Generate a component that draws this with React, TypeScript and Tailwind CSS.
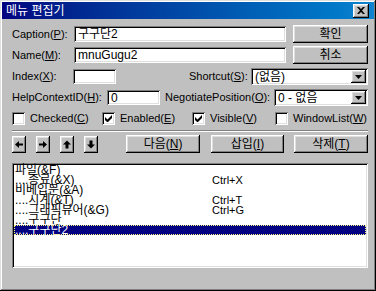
const raised =
  'bg-[#c0c0c0] shadow-[inset_-1px_-1px_#000,inset_1px_1px_#fff,inset_-2px_-2px_#808080,inset_2px_2px_#dfdfdf]'
const sunken =
  'bg-white shadow-[inset_1px_1px_#808080,inset_-1px_-1px_#fff,inset_2px_2px_#000,inset_-2px_-2px_#dfdfdf]'

function Btn({ children, className = '' }: { children: React.ReactNode; className?: string }) {
  return (
    <div className={`${raised} flex items-center justify-center text-black text-[12px] ${className}`}>{children}</div>
  )
}

function Field({ value, className = '' }: { value?: string; className?: string }) {
  return (
    <div className={`${sunken} flex items-center pl-[4px] text-black text-[12px] ${className}`}>
      <span className="leading-none">{value}</span>
    </div>
  )
}

function Combo({ value, className = '' }: { value: string; className?: string }) {
  return (
    <div className={`${sunken} flex items-center p-[2px] text-[12px] ${className}`}>
      <span className="flex-1 pl-[2px] leading-none">{value}</span>
      <div className={`${raised} w-[15px] h-full flex items-center justify-center`}>
        <svg width="7" height="4" viewBox="0 0 7 4">
          <path d="M0 0h7L3.5 4z" fill="#000" />
        </svg>
      </div>
    </div>
  )
}

function Check({ checked, children, className = '' }: { checked?: boolean; children: React.ReactNode; className?: string }) {
  return (
    <div className={`flex items-center gap-[5px] ${className}`}>
      <div className={`${sunken} w-[13px] h-[13px] flex items-center justify-center`}>
        {checked && (
          <svg width="7" height="7" viewBox="0 0 7 7">
            <path d="M0 2v3l2 2h1l4-4V0L2.5 4.5z" fill="#000" />
          </svg>
        )}
      </div>
      <span>{children}</span>
    </div>
  )
}

function Arrow({ dir }: { dir: 'l' | 'r' | 'u' | 'd' }) {
  const d = {
    l: 'M1 4.5 5 1v2.5h4v2H5V8z',
    r: 'M9 4.5 5 1v2.5H1v2h4V8z',
    u: 'M5 0.5 1 4.5h2.5v4h3v-4H9z',
    d: 'M5 8.5 1 4.5h2.5v-4h3v4H9z',
  }[dir]
  return (
    <Btn className="w-[14px] h-[17px]">
      <svg width="10" height="9" viewBox="0 0 10 9">
        <path d={d} fill="#000" />
      </svg>
    </Btn>
  )
}

const items = [
  { text: '파일(&F)', dots: false },
  { text: '종료(&X)', dots: true, key: 'Ctrl+X' },
  { text: '비베입문(&A)', dots: false },
  { text: '시계(&T)', dots: true, key: 'Ctrl+T' },
  { text: '그래픽뷰어(&G)', dots: true, key: 'Ctrl+G' },
  { text: '구구단', dots: true },
  { text: '구구단2', dots: true, sel: true },
]

export default function App() {
  return (
    <div
      className="w-[376px] h-[291px] bg-[#c0c0c0] p-[2px] text-[11px] text-black shadow-[inset_-1px_-1px_#000,inset_1px_1px_#dfdfdf,inset_-2px_-2px_#808080,inset_2px_2px_#fff] flex flex-col"
      style={{ fontFamily: '"Liberation Sans", "Noto Sans CJK KR", sans-serif' }}
    >
      <div className="h-[17px] bg-gradient-to-r from-[#000080] to-[#1084d0] flex items-center pl-[4px] pr-[5px]">
        <span className="text-white text-[12px] leading-none">메뉴 편집기</span>
        <div className={`${raised} ml-auto w-[16px] h-[14px] flex items-center justify-center`}>
          <svg width="8" height="7" viewBox="0 0 8 7">
            <path d="M0 0h2l2 2 2-2h2L5 3.5 8 7H6L4 5 2 7H0l3-3.5z" fill="#000" />
          </svg>
        </div>
      </div>

      <div className="flex flex-col pl-[10px] pr-[6px] pt-[6px]">
        <div className="flex items-center h-[18px]">
          <span className="w-[62px]">Caption(<u>P</u>):</span>
          <Field value="구구단2" className="w-[212px] h-[16px]" />
          <Btn className="ml-auto w-[75px] h-[18px]">확인</Btn>
        </div>
        <div className="flex items-center h-[18px] mt-[3px]">
          <span className="w-[62px]">Name(<u>M</u>):</span>
          <Field value="mnuGugu2" className="w-[212px] h-[16px]" />
          <Btn className="ml-auto w-[75px] h-[18px]">취소</Btn>
        </div>
        <div className="flex items-center h-[17px] mt-[4px]">
          <span className="w-[61px]">Index(<u>X</u>):</span>
          <Field className="w-[43px] h-[15px]" />
          <span className="ml-[73px]">Shortcut(<u>S</u>):</span>
          <Combo value="(없음)" className="ml-auto w-[117px] h-[17px]" />
        </div>
        <div className="flex items-center h-[17px] mt-[4px]">
          <span className="w-[95px]">HelpContextID(<u>H</u>):</span>
          <Field value="0" className="w-[53px] h-[15px]" />
          <span className="ml-[5px]">NegotiatePosition(<u>O</u>):</span>
          <Combo value="0 - 없음" className="ml-auto w-[94px] h-[17px]" />
        </div>
        <div className="flex items-center h-[15px] mt-[5px]">
          <Check className="w-[90px]">Checked(<u>C</u>)</Check>
          <Check checked className="w-[90px]">Enabled(<u>E</u>)</Check>
          <Check checked className="w-[83px]">Visible(<u>V</u>)</Check>
          <Check>WindowList(<u>W</u>)</Check>
        </div>
        <div className="mt-[4px] border-t border-t-[#808080] border-b border-b-white" />
        <div className="flex items-center h-[18px] mt-[3px]">
          <div className="flex gap-[10px] w-[114px]">
            <Arrow dir="l" />
            <Arrow dir="r" />
            <Arrow dir="u" />
            <Arrow dir="d" />
          </div>
          <Btn className="w-[74px] h-[18px]">다음(<u>N</u>)</Btn>
          <Btn className="ml-[11px] w-[73px] h-[18px]">삽입(<u>I</u>)</Btn>
          <Btn className="ml-auto w-[74px] h-[18px]">삭제(<u>T</u>)</Btn>
        </div>
        <div className={`${sunken} mt-[10px] h-[105px] p-[2px] overflow-hidden text-[12px]`}>
          {items.map((it) => (
            <div
              key={it.text}
              className={`flex h-[10px] leading-[10px] whitespace-nowrap ${
                it.sel ? 'bg-[#000080] text-white outline-1 outline-dotted outline-[#ffff80] -outline-offset-1' : ''
              }`}
            >
              <span className="w-[198px] pl-[1px]">
                {it.dots ? '....' : ''}
                {it.text}
              </span>
              <span className="text-[11px]">{it.key ?? ''}</span>
            </div>
          ))}
        </div>
      </div>
    </div>
  )
}
